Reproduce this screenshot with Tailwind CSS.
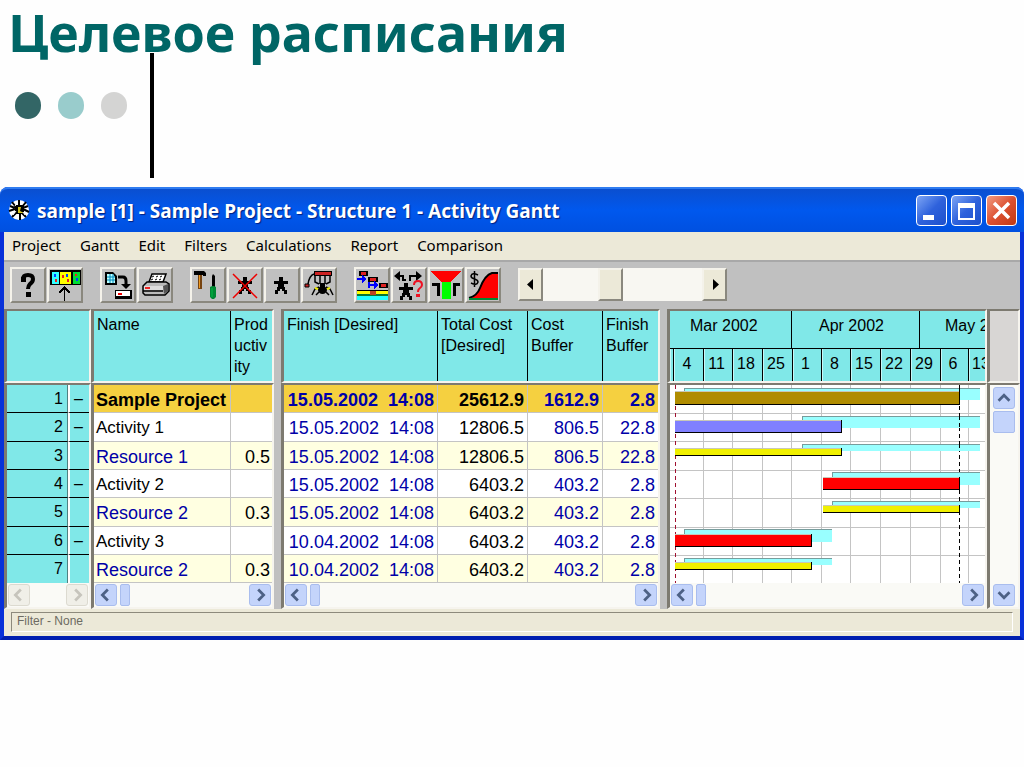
<!DOCTYPE html>
<html lang="ru">
<head>
<meta charset="utf-8">
<title>Целевое расписания</title>
<script src="https://cdn.jsdelivr.net/npm/@tailwindcss/browser@4"></script>
</head>
<body class="min-h-screen bg-[#fefefe] font-['Liberation_Sans',Arial,sans-serif] text-black">

<svg class="hidden" aria-hidden="true">
  <symbol id="left" viewBox="0 0 22 22"><path d="M13 5 7 11l6 6" fill="none" stroke="currentColor" stroke-width="3"/></symbol>
  <symbol id="right" viewBox="0 0 22 22"><path d="m9 5 6 6-6 6" fill="none" stroke="currentColor" stroke-width="3"/></symbol>
  <symbol id="up" viewBox="0 0 22 22"><path d="m5 14 6-6 6 6" fill="none" stroke="currentColor" stroke-width="3"/></symbol>
  <symbol id="down" viewBox="0 0 22 22"><path d="m5 8 6 6 6-6" fill="none" stroke="currentColor" stroke-width="3"/></symbol>
  <symbol id="man" viewBox="0 0 14 17"><path d="M5 0h4v4h5v3h-4v3h1v3h2v4h-3v-3H8v-2H6v2H4v3H1v-4h2v-3h1V7H0V4h5z" fill="#000"/></symbol>
</svg>

<header class="relative h-[187px]">
  <div class="absolute top-[53px] left-[150px] h-[125px] w-1 bg-black"></div>
  <h1 class="relative pl-2 font-['Comic_Sans_MS','Noto_Sans',sans-serif] text-[52px] leading-[64px] font-bold whitespace-nowrap text-[#006666]">Целевое расписания</h1>
  <div class="mt-7 flex gap-[17px] pl-[15px]">
    <span class="h-[27px] w-[26px] rounded-full bg-[#336666]"></span>
    <span class="h-[27px] w-[26px] rounded-full bg-[#99cccc]"></span>
    <span class="h-[27px] w-[26px] rounded-full bg-[#d4d4d3]"></span>
  </div>
</header>

<main class="flex flex-col rounded-t-lg border-x-4 border-b-4 border-[#0831d9] border-b-[#001fb0] bg-[#0058e6]">
  <div class="-mx-1 flex h-[45px] items-center rounded-t-lg border-t-2 border-[#2f7cf0] bg-linear-to-b from-[#0a4fd0] via-[#0058ee] to-[#0050e0] pr-[7px] pl-2">
    <svg class="h-6 w-[22px]" viewBox="0 0 22 24" aria-hidden="true">
      <circle cx="11" cy="11" r="10" fill="#fff"/>
      <path d="M7 6h9v9H7z"/>
      <path d="M4 3l4 5M11 1v6M18 3l-4 5M1 12l6-2M15 10l6 3M4 18l4-4M12 21v-6M18 18l-4-4M2 7l5 2M20 7l-5 2" stroke="#000" stroke-width="2"/>
      <path d="M10 8h3l-1 4 4 2h-6z" fill="#d8c820"/><path d="M9 4 7 7M15 13l2 3M8 12l-3 4" stroke="#fff"/>
    </svg>
    <h2 class="pl-[7px] font-['Noto_Sans',sans-serif] text-[19px] leading-6 font-bold whitespace-nowrap text-white [text-shadow:1px_1px_1px_#002080]">sample [1] - Sample Project - Structure 1 - Activity Gantt</h2>
    <div class="ml-auto flex gap-1 [&>button]:size-[31px] [&>button]:rounded-[4px] [&>button]:border [&>button]:border-white">
      <button aria-label="Minimize" class="bg-linear-to-br from-[#7ea4f4] via-[#2f62dc] to-[#1c50cc]"><svg viewBox="0 0 29 29"><path d="M6 19h11v5H6z" fill="#fff"/></svg></button>
      <button aria-label="Maximize" class="bg-linear-to-br from-[#7ea4f4] via-[#2f62dc] to-[#1c50cc]"><svg viewBox="0 0 29 29"><path d="M6 7h17v17H6zM8 12v10h13V12z" fill="#fff" fill-rule="evenodd"/></svg></button>
      <button aria-label="Close" class="bg-linear-to-br from-[#f09a80] via-[#dc5030] to-[#c03810]"><svg viewBox="0 0 29 29"><path d="m7 7 15 15M22 7 7 22" stroke="#fff" stroke-width="3.5"/></svg></button>
    </div>
  </div>

  <nav class="flex h-7 items-center gap-[19px] bg-[#ece9d8] pb-[2px] pl-2 font-['Noto_Sans',sans-serif] text-[15px] leading-5">
    <button>Project</button><button>Gantt</button><button>Edit</button><button>Filters</button><button>Calculations</button><button>Report</button><button>Comparison</button>
  </nav>

  <div class="flex h-[49px] items-center gap-[17px] border-t-2 border-[#a8a8a8] bg-[#c0c0c0] pb-[2px] pl-[6px] [&_button]:border-2 [&_button]:border-t-[#f4f2ea] [&_button]:border-r-[#8a887e] [&_button]:border-b-[#8a887e] [&_button]:border-l-[#f4f2ea]">
    <div class="flex gap-px [&>button]:size-9">
      <button aria-label="Help"><svg viewBox="2 2 32 32"><path d="M13 14v-2q0-4 5-4t5 4q0 3-3 5-2 2-2 5" fill="none" stroke="#000" stroke-width="4"/><path d="M11 10h5v5h-5zM16 25h5v5h-5z"/></svg></button>
      <button aria-label="Levels"><svg viewBox="2 2 32 32" shape-rendering="crispEdges"><path d="M3 3h31v15H3z"/><path d="M5 5h7v12H5z" fill="#3ff"/><path d="M13 5h11v12H13z" fill="#ff0"/><path d="M26 5h7v12h-7z" fill="#0d3"/><path d="M7 7h2v3H7zM19 7h2v3h-2zM29 11h2v3h-2z" fill="#04f"/><path d="M15 8h2v3h-2zM20 12h2v3h-2zM28 7h2v2h-2zM8 12h2v3H8z" fill="#e22"/><path d="M17 20h1v14h-1z"/><path d="m12 26 5.500-5.500L23 26" fill="none" stroke="#000" stroke-width="1.500"/></svg></button>
    </div>
    <div class="flex gap-px [&>button]:size-9">
      <button aria-label="Save"><svg viewBox="2 2 32 32"><path d="M5 5h8l4 4v9H5z"/><path d="M7 7h6l2 3v6H7z" fill="#bff"/><path d="M7 10h8M7 13h8M10 7v9M13 7v9" stroke="#08b"/><path d="M18 10h5q3 0 3 4v4" fill="none" stroke="#000" stroke-width="3"/><path d="M21 17h10l-5 5z"/><path d="M15 23h17v9H15z"/><path d="M16 24h14v5H16z" fill="#fff"/><path d="M18 26h4v2h-4z" fill="#e00"/></svg></button>
      <button aria-label="Print"><svg viewBox="2 2 32 32"><path d="m12 15 3-8h14l-3 8z" fill="#fff" stroke="#000" stroke-width="1.500"/><path d="m15 10 2-1m2 1 2-1m2 1 2-1M14 13l2-1m2 1 2-1m2 1 2-1" stroke="#000"/><path d="M6 19l4-4h19l3 2v7l-4 4H8l-2-2z" fill="#bbb" stroke="#000" stroke-width="1.500"/><path d="M7 19h19v4H7z" fill="#ddd"/><path d="M6 24h20" stroke="#000" stroke-width="1.500"/><path d="M26 19l5-2v7l-4 3z" fill="#555"/><path d="M8 20h5v2H8z" fill="#e22"/></svg></button>
    </div>
    <div class="flex gap-px [&>button]:size-9">
      <button aria-label="Tools"><svg viewBox="2 2 32 32"><path d="M4 4h10l2 2v3h-3V8H4z"/><path d="M8 8h4v14H8z" fill="#741"/><path d="M9 8h1v13H9z" fill="#e92"/><path d="m22 9 1-2 2 2v11h-3z"/><path d="M20 20q3-2 6 0v10l-2 2h-2l-2-2z" fill="#083"/><path d="M22 21v9" stroke="#0b4"/></svg></button>
      <button aria-label="Remove resource"><svg viewBox="2 2 32 32"><use href="#man" x="11" y="10" width="14" height="17"/><path d="m6 7 24 24M30 7 6 31" stroke="#e00" stroke-width="1.500"/></svg></button>
      <button aria-label="Resource"><svg viewBox="2 2 32 32"><use href="#man" x="10" y="10" width="14" height="17"/></svg></button>
      <button aria-label="Resource loading"><svg viewBox="2 2 32 32"><path d="M13 4h18v5H13z"/><path d="M14 5h16v3H14z" fill="#c22"/><path d="M4 17h4v3H4z" fill="#c22" stroke="#000"/><path d="M7 17c1-6 3-9 6-10M14 9v6l4 2M19 9v8M24 9v8M29 9v6l-4 2" fill="none" stroke="#000" stroke-width="1.500"/><path d="M19 16h5v4h-5z"/><ellipse cx="21.500" cy="23" rx="4.500" ry="4"/><path d="m18 20-4 2-3 6M25 20l4 2 3 6M18 25l-3 3M25 25l3 3" fill="none" stroke="#000" stroke-width="1.500"/><path d="m14 21 3 1M29 21l-3 1" stroke="#ee0" stroke-width="2"/></svg></button>
    </div>
    <div class="flex gap-px [&>button]:size-9">
      <button aria-label="Gantt links"><svg viewBox="2 2 32 32" shape-rendering="crispEdges"><path d="M5 4h9v5H5zM14 10h10v5H14zM25 16h9v5h-9z"/><path d="M7 5h5v3H7zM16 11h6v3h-6zM27 17h5v3h-5z" fill="#d22"/><path d="M3 12h7M14 18h8" stroke="#00f" stroke-width="2"/><path d="m8 8 5 4-5 4zM20 14l5 4-5 4z" fill="#00f"/><path d="M15 15v6" stroke="#00f" stroke-width="2"/><path d="M3 23h31v4H3z" fill="#ff0"/><path d="M3 27h31v2H3z" fill="#087830"/><path d="M3 29h31v4H3z" fill="#2ff"/><path d="M3 23h31" stroke="#000"/><path d="M16 24h6v4h-6z" fill="#b42"/></svg></button>
      <button aria-label="Assignment"><svg viewBox="2 2 32 32"><path d="M9 4v10L3 9zM25 4v10l6-5z"/><path d="M8 9h4v4h3M26 9h-7v5" fill="none" stroke="#000" stroke-width="2"/><use href="#man" x="8" y="16" width="14" height="17"/><path d="M23 18q0-4 4-4t4 4q0 2-3 4-1 1-1 3M26 28h2v1h-2z" fill="none" stroke="#e12" stroke-width="2"/></svg></button>
      <button aria-label="Bottleneck"><svg viewBox="2 2 32 32" shape-rendering="crispEdges"><path d="M3 4h30L23 15H13z" fill="#f00"/><path d="M14 15h9v17h-9z" fill="#0f0"/><path d="M4 17h6v12M32 17h-6v12" fill="none" stroke="#000" stroke-width="3"/></svg></button>
      <button aria-label="Cost curve"><svg viewBox="2 2 32 32"><path d="M5 31q7-2 10-10Q20 8 27 6h6v25z" fill="#f00"/><path d="M4 31q8-2 11-10Q20 8 27 6h6" fill="none" stroke="#000" stroke-width="2"/><path d="M4 32h29" stroke="#083" stroke-width="2"/><path d="M13 8q-6-3-7 1 0 2 3.500 3 3.500 1 3.500 3-1 4-7 1M9.500 4v16" fill="none" stroke="#000" stroke-width="1.500"/></svg></button>
    </div>
    <div class="flex h-[33px] bg-[#f8f7f2] [&>button]:w-[25px] [&>button]:bg-[#ece9d8]">
      <button aria-label="Scroll left"><svg viewBox="0 0 21 29"><path d="M13 9v11l-6-5.500z"/></svg></button>
      <span class="w-[55px]"></span>
      <button aria-label="Position"></button>
      <span class="w-[79px]"></span>
      <button aria-label="Scroll right"><svg viewBox="0 0 21 29"><path d="M9 9v11l6-5.500z"/></svg></button>
    </div>
  </div>

  <section class="flex bg-[#c0c0c0] text-[16px] [&_.pane]:overflow-hidden [&_.pane]:border-t-2 [&_.pane]:border-r-2 [&_.pane]:border-b-2 [&_.pane]:border-l-[3px] [&_.pane]:border-t-[#7d7a70] [&_.pane]:border-r-[#f6f4ee] [&_.pane]:border-b-[#f6f4ee] [&_.pane]:border-l-[#7d7a70] [&_.head]:h-[74px] [&_.head]:bg-[#80e8e8] [&_.bar]:flex [&_.bar]:h-6 [&_.bar]:items-center [&_.bar]:gap-[3px] [&_.bar]:bg-[#fafaf6] [&_.bar]:px-px [&_.sb]:size-[22px] [&_.sb]:shrink-0 [&_.sb]:rounded-[3px] [&_.sb]:border [&_.sb]:border-[#a9bdee] [&_.sb]:bg-[#c4d4fb] [&_.sb]:text-[#4d6185] [&_.sb_svg]:size-5 [&_.off_svg]:size-5 [&_.off]:size-[22px] [&_.off]:shrink-0 [&_.off]:rounded-[3px] [&_.off]:border [&_.off]:border-[#dcdad0] [&_.off]:bg-[#f0efe8] [&_.off]:text-[#c6c4bc] [&_.thumb]:h-[22px] [&_.thumb]:w-[10px] [&_.thumb]:rounded-[2px] [&_.thumb]:border [&_.thumb]:border-[#a9bdee] [&_.thumb]:bg-[#c4d4fb] [&_table]:w-full [&_table]:table-fixed [&_table]:border-separate [&_table]:border-spacing-0 [&_th]:font-normal">

    <div class="w-[87px] shrink-0">
      <div class="pane head"></div>
      <div class="pane">
        <table class="[&_td]:overflow-hidden [&_td]:border-b [&_td]:border-b-black [&_td]:bg-[#80e8e8] [&_td]:p-0 [&_td]:pr-1 [&_td]:text-right [&_td]:leading-5 [&_td:last-child]:border-l-2 [&_td:last-child]:border-l-white [&_td:last-child]:pr-[6px] [&_td:first-child]:border-r [&_td:first-child]:border-r-[#508080] [&_tr]:h-7">
          <colgroup><col class="w-[61px]"><col></colgroup>
          <tr><td>1</td><td>–</td></tr>
          <tr class="h-[29px]!"><td>2</td><td>–</td></tr>
          <tr><td>3</td><td></td></tr>
          <tr><td>4</td><td>–</td></tr>
          <tr class="h-[29px]!"><td>5</td><td></td></tr>
          <tr><td>6</td><td>–</td></tr>
          <tr><td class="border-b-0!">7</td><td class="border-b-0!"></td></tr>
        </table>
        <div class="bar justify-between"><button class="off" aria-label="Left" disabled><svg><use href="#left"/></svg></button><button class="off" aria-label="Right" disabled><svg><use href="#right"/></svg></button></div>
      </div>
    </div>

    <div class="w-[183px] shrink-0">
      <div class="pane head">
        <table class="[&_th]:h-[70px] [&_th]:p-0 [&_th]:pt-[3px] [&_th]:pl-[3px] [&_th]:text-left [&_th]:align-top [&_th]:leading-[21px]">
          <colgroup><col class="w-[137px]"><col></colgroup>
          <tr><th class="border-r border-black">Name</th><th>Prod<br>uctiv<br>ity</th></tr>
        </table>
      </div>
      <div class="pane">
        <table class="text-[18px] leading-5 [&_td]:overflow-hidden [&_td]:border-b [&_td]:border-[#c4c4c4] [&_td]:p-0 [&_td]:pt-[2px] [&_td]:pl-[2px] [&_td]:whitespace-nowrap [&_td:first-child]:border-r [&_td:last-child]:pr-[2px] [&_td:last-child]:text-right [&_tr]:h-7 [&_tr]:bg-white">
          <colgroup><col class="w-[137px]"><col></colgroup>
          <tr class="bg-[#f5d040]! font-bold"><td>Sample Project</td><td></td></tr>
          <tr class="h-[29px]!"><td class="text-[17px]">Activity 1</td><td></td></tr>
          <tr class="bg-[#ffffe1]!"><td class="text-[#0000a8]">Resource 1</td><td>0.5</td></tr>
          <tr><td class="text-[17px]">Activity 2</td><td></td></tr>
          <tr class="h-[29px]! bg-[#ffffe1]!"><td class="text-[#0000a8]">Resource 2</td><td>0.3</td></tr>
          <tr><td class="text-[17px]">Activity 3</td><td></td></tr>
          <tr class="bg-[#ffffe1]!"><td class="text-[#0000a8]">Resource 2</td><td>0.3</td></tr>
        </table>
        <div class="bar"><button class="sb" aria-label="Left"><svg><use href="#left"/></svg></button><span class="thumb"></span><button class="sb ml-auto" aria-label="Right"><svg><use href="#right"/></svg></button></div>
      </div>
    </div>

    <div class="w-[7px] shrink-0"></div>

    <div class="w-[379px] shrink-0">
      <div class="pane head">
        <table class="[&_th]:h-[70px] [&_th]:border-r [&_th]:border-black [&_th]:p-0 [&_th]:pt-[3px] [&_th]:pl-[3px] [&_th]:text-left [&_th]:align-top [&_th]:leading-[21px] [&_th:last-child]:border-r-0">
          <colgroup><col class="w-[154px]"><col class="w-[90px]"><col class="w-[75px]"><col></colgroup>
          <tr><th>Finish [Desired]</th><th>Total Cost<br>[Desired]</th><th>Cost<br>Buffer</th><th>Finish<br>Buffer</th></tr>
        </table>
      </div>
      <div class="pane">
        <table class="text-[18px] leading-5 text-[#0000a8] [&_td]:overflow-hidden [&_td]:border-r [&_td]:border-b [&_td]:border-[#c4c4c4] [&_td]:p-0 [&_td]:pt-[2px] [&_td]:pr-[3px] [&_td]:text-right [&_td]:whitespace-pre [&_td:last-child]:border-r-0 [&_td:nth-child(2)]:text-black [&_tr]:h-7 [&_tr]:bg-white">
          <colgroup><col class="w-[154px]"><col class="w-[90px]"><col class="w-[75px]"><col></colgroup>
          <tr class="bg-[#f5d040]! font-bold"><td>15.05.2002  14:08</td><td>25612.9</td><td>1612.9</td><td>2.8</td></tr>
          <tr class="h-[29px]!"><td>15.05.2002  14:08</td><td>12806.5</td><td>806.5</td><td>22.8</td></tr>
          <tr class="bg-[#ffffe1]!"><td>15.05.2002  14:08</td><td>12806.5</td><td>806.5</td><td>22.8</td></tr>
          <tr><td>15.05.2002  14:08</td><td>6403.2</td><td>403.2</td><td>2.8</td></tr>
          <tr class="h-[29px]! bg-[#ffffe1]!"><td>15.05.2002  14:08</td><td>6403.2</td><td>403.2</td><td>2.8</td></tr>
          <tr><td>10.04.2002  14:08</td><td>6403.2</td><td>403.2</td><td>2.8</td></tr>
          <tr class="bg-[#ffffe1]!"><td>10.04.2002  14:08</td><td>6403.2</td><td>403.2</td><td>2.8</td></tr>
        </table>
        <div class="bar"><button class="sb" aria-label="Left"><svg><use href="#left"/></svg></button><span class="thumb"></span><button class="sb ml-auto" aria-label="Right"><svg><use href="#right"/></svg></button></div>
      </div>
    </div>

    <div class="w-[7px] shrink-0"></div>

    <div class="min-w-0 flex-1">
      <div class="pane head">
        <div class="flex h-[38px] items-center border-b border-black leading-5 whitespace-nowrap [&>div]:flex [&>div]:h-full [&>div]:shrink-0 [&>div]:items-center [&>div]:pb-[7px]">
          <div class="w-[122px] border-r border-black pl-5">Mar 2002</div>
          <div class="w-[128px] border-r border-black pl-[27px]">Apr 2002</div>
          <div class="pl-[25px]">May 2002</div>
        </div>
        <div class="flex h-8 leading-[29px] [&>div]:shrink-0 [&>div]:border-r [&>div]:border-l [&>div]:border-r-black [&>div]:border-l-[#c8f8f8] [&>div]:pr-1 [&>div]:text-center">
          <div class="w-1 pr-0!"></div><div class="w-[30px]">4</div><div class="w-[29px]">11</div><div class="w-[30px]">18</div><div class="w-[30px]">25</div><div class="w-[29px]">1</div><div class="w-[29px]">8</div><div class="w-[30px]">15</div><div class="w-[30px]">22</div><div class="w-[30px]">29</div><div class="w-[28px]">6</div><div class="w-[28px]">13</div>
        </div>
      </div>
      <div class="pane">
        <svg class="block h-[198px] w-full bg-white" viewBox="0 0 315 198" preserveAspectRatio="none" shape-rendering="crispEdges" role="img" aria-label="Activity Gantt">
          <path d="M33.500 0v198M62.500 0v198M92.500 0v198M121.500 0v198M151.500 0v198M180.500 0v198M210.500 0v198M240.500 0v198M270.500 0v198M298.500 0v198M0 28.500h315M0 56.500h315M0 85.500h315M0 113.500h315M0 142.500h315M0 170.500h315" stroke="#c4c4c4"/>
          <path d="M5.500 0v198" stroke="#a01030" stroke-dasharray="4 3"/>
          <path d="M289.500 0v198" stroke="#000" stroke-dasharray="4 3"/>
          <path d="M14 3h296v12H14zM132 31h178v12H132zM132 59h178v7H132zM162 87h148v13H162zM162 116h148v7H162zM14 144h148v13H14zM14 173h148v7H14z" fill="#9ff"/>
          <path d="M14.500 7V3.500H310M132.500 35v-3.500H310M132.500 63v-3.500H310M162.500 92v-4.500H310M162.500 120v-3.500H310M14.500 149v-4.500H162M14.500 177v-3.500H162" fill="none" stroke="#779c9c"/>
          <path d="M289.500 3v12M289.500 31v12M289.500 59v7" stroke="#000" stroke-dasharray="4 3"/>
          <path d="M5 6h285v14H5zM5 35h167v13H5zM5 63h167v8H5zM153 92h137v13H153zM153 120h137v8H153zM5 149h137v13H5zM5 177h137v8H5z"/>
          <path d="M5 7h284v12H5z" fill="#b08c00"/>
          <path d="M5 35h166v12H5z" fill="#8080ff"/>
          <path d="M5 64h166v6H5zM153 121h136v6H153zM5 178h136v6H5z" fill="#f0f000"/>
          <path d="M153 93h136v11H153zM5 150h136v11H5z" fill="#f00"/>
          <path d="M5 6.500h284M5 35.500h166M5 63.500h166M153 92.500h136M153 120.500h136M5 149.500h136M5 177.500h136" stroke="#c8c8b8"/>
        </svg>
        <div class="bar"><button class="sb" aria-label="Left"><svg><use href="#left"/></svg></button><span class="thumb"></span><button class="sb ml-auto" aria-label="Right"><svg><use href="#right"/></svg></button></div>
      </div>
    </div>

    <div class="flex w-[33px] shrink-0 flex-col">
      <div class="pane head bg-[#d8d6d4]!"></div>
      <div class="pane flex flex-1 flex-col items-center gap-[2px] bg-[#fafaf6] pt-[2px] pb-px">
        <button class="sb" aria-label="Up"><svg><use href="#up"/></svg></button>
        <span class="thumb w-[22px]!"></span>
        <button class="sb mt-auto" aria-label="Down"><svg><use href="#down"/></svg></button>
      </div>
    </div>
  </section>

  <footer class="bg-[#ece9d8] px-[7px] pt-[3px] pb-1">
    <p class="h-5 border border-t-[#8d8a7c] border-r-white border-b-white border-l-[#8d8a7c] pl-[5px] text-[12px] leading-4 text-[#6d6b62]">Filter - None</p>
  </footer>
</main>
</body>
</html>
